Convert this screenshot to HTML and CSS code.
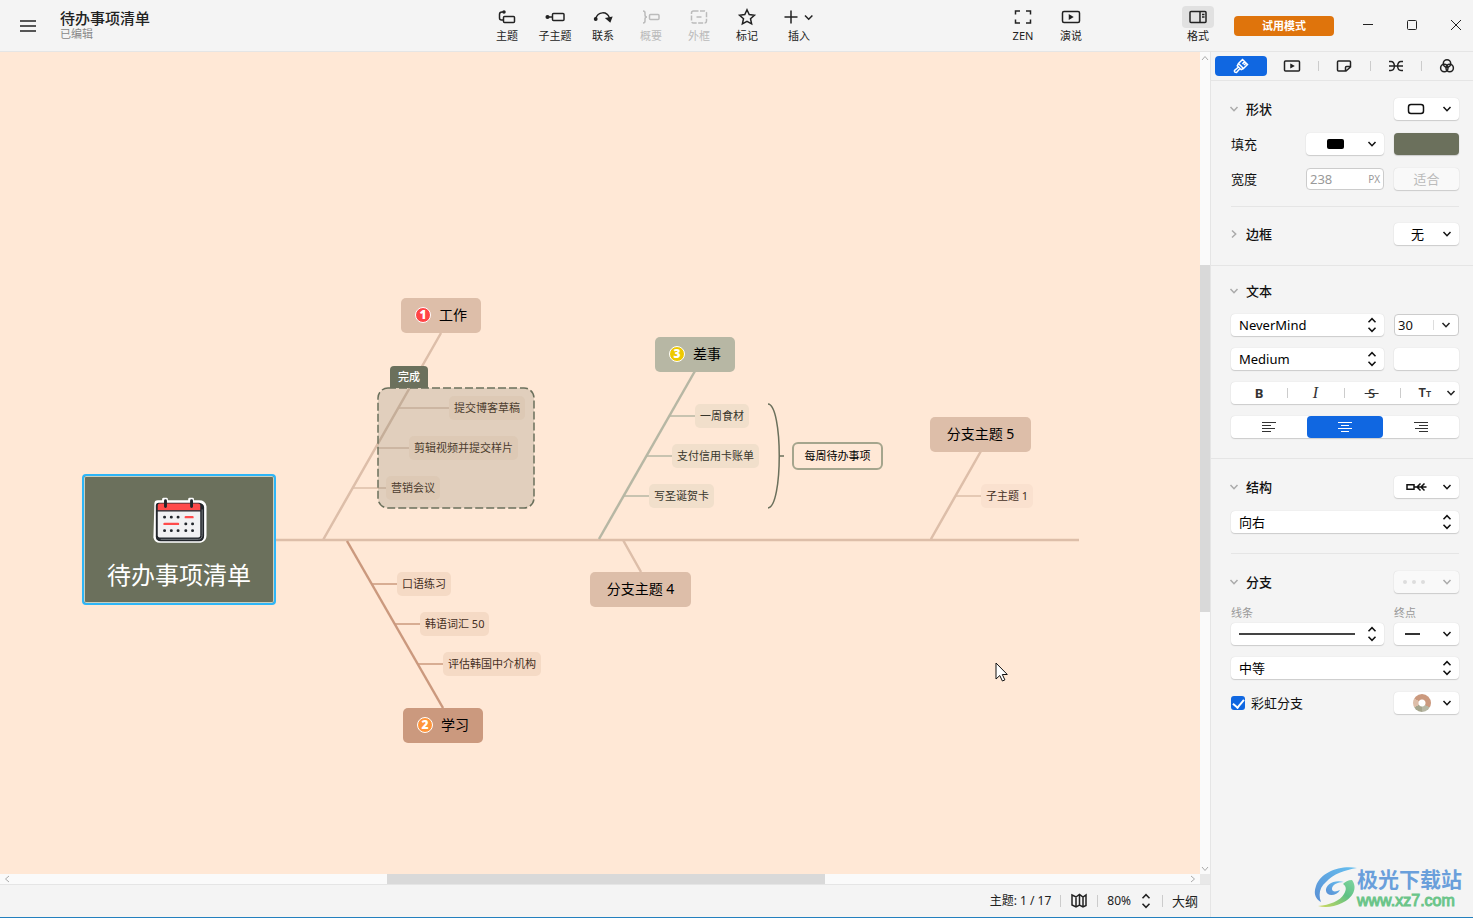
FILE: index.html
```html
<!DOCTYPE html>
<html lang="zh-CN">
<head>
<meta charset="utf-8">
<title>待办事项清单</title>
<link rel="stylesheet" href="styles.css">
</head>
<body>
<svg class="defs" aria-hidden="true">
  <symbol id="down" viewBox="0 0 10 10"><path d="M1.500 3 5 6.700 8.500 3"/></symbol>
  <symbol id="updown" viewBox="0 0 10 16"><path d="M1.500 5.300 5 1.700l3.500 3.600M1.500 10.700 5 14.300l3.500-3.600"/></symbol>
</svg>
<header class="topbar">
  <div class="brand">
    <button class="menu" aria-label="菜单"><svg width="16" height="14" viewBox="0 0 16 14"><path d="M0 2h16M0 7h16M0 12h16"/></svg></button>
    <div>
      <h1 class="doc-title">待办事项清单</h1>
      <p class="doc-state">已编辑</p>
    </div>
  </div>
  <nav class="tools">
    <button class="tool"><svg width="20" height="18" viewBox="0 0 20 18"><rect x="6.500" y="8.500" width="11" height="6" rx="1"/><path d="M6 12H4.500Q2.500 12 2.500 10V6.500Q2.500 4 5 4H6"/><circle class="solid" cx="7" cy="4" r="1"/></svg><span>主题</span></button>
    <button class="tool"><svg width="20" height="18" viewBox="0 0 20 18"><rect x="7.500" y="5.500" width="11.500" height="7" rx="1"/><path d="M3 9h4"/><circle class="solid" cx="2.500" cy="9" r="1.300"/></svg><span>子主题</span></button>
    <button class="tool"><svg width="20" height="18" viewBox="0 0 20 18"><path d="M2.500 11C5 3 14 3 16.500 10"/><circle class="solid" cx="2.700" cy="11" r="1.200"/><path class="solid" d="m13.500 10.500 5-1-1.500 4z"/></svg><span>联系</span></button>
    <button class="tool" disabled><svg width="20" height="18" viewBox="0 0 20 18"><path d="M2 3Q4 3 4 5v2q0 2 2 2-2 0-2 2v2q0 2-2 2"/><rect x="8.500" y="6.500" width="9.500" height="5" rx="1"/></svg><span>概要</span></button>
    <button class="tool" disabled><svg width="20" height="18" viewBox="0 0 20 18"><rect x="2.500" y="3" width="15" height="12" rx="2" stroke-dasharray="5 1.500"/><path d="M7.500 9h5"/></svg><span>外框</span></button>
    <button class="tool"><svg width="20" height="18" viewBox="0 0 20 18"><path d="m10 1.800 2.200 4.800 5.200.600-3.900 3.500 1.100 5.200L10 13.300l-4.600 2.600 1.100-5.200-3.900-3.500 5.200-.6z"/></svg><span>标记</span></button>
    <button class="tool insert"><svg width="32" height="18" viewBox="0 0 32 18"><path d="M1.500 9h13M8 2.500v13M22 7.500l3.700 3.700 3.700-3.700"/></svg><span>插入</span></button>
  </nav>
  <div></div>
  <nav class="tools">
    <button class="tool"><svg width="20" height="18" viewBox="0 0 20 18"><path d="M2.500 6.500V3H7M13 3h4.500v3.500M17.500 11.500V15H13M7 15H2.500v-3.500"/></svg><span>ZEN</span></button>
    <button class="tool"><svg width="20" height="18" viewBox="0 0 20 18"><rect x="1.500" y="3.500" width="17" height="11" rx="1.500"/><path class="solid" d="m8.500 7.300 2.800 1.700-2.800 1.700z"/></svg><span>演说</span></button>
  </nav>
  <div></div>
  <div class="right-tools">
    <button class="tool format"><svg width="32" height="22" viewBox="0 0 32 22"><rect x="8" y="5.500" width="16" height="11" rx="1"/><path d="M18 5.500v11M20 8.500h2.500M20 11h2.500"/></svg><span>格式</span></button>
    <button class="trial">试用模式</button>
    <div class="window-buttons">
      <button aria-label="最小化"><svg width="12" height="12" viewBox="0 0 12 12"><path d="M1 5.500h10"/></svg></button>
      <button aria-label="最大化"><svg width="12" height="12" viewBox="0 0 12 12"><rect x="1.500" y="1.500" width="9" height="9" rx="1"/></svg></button>
      <button aria-label="关闭"><svg width="12" height="12" viewBox="0 0 12 12"><path d="m1 1 10 10M11 1 1 11"/></svg></button>
    </div>
  </div>
</header>
<div class="body">
  <section class="workspace">
    <main class="canvas">
      <svg class="links" width="1200" height="822" viewBox="0 52 1200 822" aria-hidden="true">
        <g class="sand">
          <path d="M276 540h803M441 333 323 540M623 540l18 32M981 451l-50 88"/>
          <path class="thin" d="M399 408h52M377 448h33M353 488h34M955 496h26"/>
        </g>
        <g class="olive">
          <path d="m695 371-96 168"/>
          <path class="thin" d="M670 416h27M647 456h26M624 496h26"/>
        </g>
        <g class="clay">
          <path d="m347 541 96 167"/>
          <path class="thin" d="M372 584h26M395 624h26M418 664h26"/>
        </g>
        <path class="brace" d="M768 404c15 1 15 103 0 104M779 456h5"/>
      </svg>
      <div class="central">
        <svg width="56" height="48" viewBox="0 0 58 48">
          <path class="halo" d="M5 6q0-2 2-2h6V1.500h3V4h24V1.500h3V4h7q5 0 6 5v30q0 5-5 6H9q-4 0-5-4z"/>
          <path d="M8 5h42q5 1 5 5v29q0 6-5 6H10q-5 0-5-5V8q0-3 3-3z" fill="#22262c"/>
          <path d="M7 13h44v26q0 2-2 2H9q-2 0-2-2z" fill="#f1f1f3"/>
          <path d="M9 6h40q2 0 2 2v5H7V8q0-2 2-2z" fill="#ff4b4b"/>
          <path d="M15 3v6M42 3v6" stroke="#22262c" stroke-width="3" stroke-linecap="round"/>
          <path d="M6 13.500h46" stroke="#22262c" stroke-width="1.500"/>
          <path d="M53 12v26q0 5-4 5H10" stroke="#777b80" stroke-width="1" fill="none"/>
          <path d="M14 20h.1M21 20h.1M28 20h.1M36 27h.1M43 27h.1M14 34h.1M21 34h.1M28 34h.1M36 34h.1M43 34h.1" stroke="#22262c" stroke-width="3" stroke-linecap="round"/>
          <path d="M36 20h7M14 27h14" stroke="#ff4b4b" stroke-width="2.500" stroke-linecap="round"/>
        </svg>
        <span>待办事项清单</span>
      </div>
      <div class="topic work"><i class="num red">1</i>工作</div>
      <div class="leaf w1">提交博客草稿</div>
      <div class="leaf w2">剪辑视频并提交样片</div>
      <div class="leaf w3">营销会议</div>
      <svg class="boundary" width="158" height="122" viewBox="0 0 158 122"><rect x="1" y="1" width="156" height="120" rx="10"/></svg>
      <div class="boundary-label">完成</div>
      <div class="topic errand"><i class="num yellow">3</i>差事</div>
      <div class="leaf green e1">一周食材</div>
      <div class="leaf green e2">支付信用卡账单</div>
      <div class="leaf green e3">写圣诞贺卡</div>
      <div class="summary">每周待办事项</div>
      <div class="topic four">分支主题 4</div>
      <div class="topic five">分支主题 5</div>
      <div class="leaf pale f1">子主题 1</div>
      <div class="leaf s1">口语练习</div>
      <div class="leaf s2">韩语词汇 50</div>
      <div class="leaf s3">评估韩国中介机构</div>
      <div class="topic study"><i class="num orange">2</i>学习</div>
      <svg class="cursor" width="14" height="22" viewBox="0 0 14 22"><path d="M1 1v16l3.800-3.500 2.600 5.500 2.500-1.100-2.600-5.400h5z"/></svg>
    </main>
    <div class="vbar"><svg width="8" height="6" viewBox="0 0 8 6"><path d="m1 5 3-3.500L7 5"/></svg><div class="vtrack"><div class="thumb"></div></div><svg width="8" height="6" viewBox="0 0 8 6"><path d="m1 1 3 3.500L7 1"/></svg></div>
    <div class="hbar"><svg width="6" height="8" viewBox="0 0 6 8"><path d="M5 1 1.500 4 5 7"/></svg><div class="htrack"><div class="thumb"></div></div><svg width="6" height="8" viewBox="0 0 6 8"><path d="m1 1 3.500 3L1 7"/></svg></div>
    <div class="corner"></div>
    <footer class="status">
      <span>主题: 1 / 17</span><hr>
      <button aria-label="导航图"><svg width="18" height="16" viewBox="0 0 18 16"><path d="m2 2 4 2 3.500-2.500L13 4l3-2v10.500L13 14l-3.500-2L6 14l-4-2zM6 4v10M9.500 1.500V12M13 4v10"/></svg></button><hr>
      <button class="zoom">80%<svg width="10" height="16"><use href="#updown"/></svg></button><hr>
      <button class="outline">大纲</button>
    </footer>
  </section>
  <aside class="panel">
    <nav class="tabs">
      <button class="tab active" aria-label="样式"><svg width="16" height="16" viewBox="0 0 16 16"><path d="m9.500 1.500 5 5-4 4-5-5zM5.500 5.500 4.300 7.800l3.900 3.900 2.300-1.200M5.500 9l-4 3.500q-.5 2 2 2L7 10.500M11.500 3.500 9.500 6M13 5l-2 2"/></svg></button>
      <button class="tab" aria-label="演说"><svg width="18" height="16" viewBox="0 0 18 16"><rect x="1.500" y="3" width="15" height="10" rx="1"/><path class="solid" d="m8 6.700 2.300 1.300L8 9.300z"/></svg></button>
      <button class="tab" aria-label="贴纸"><svg width="18" height="16" viewBox="0 0 18 16"><path d="M3.500 3h11q1 0 1 1v5l-4.500 4H3.500q-1 0-1-1V4q0-1 1-1zM15.500 8.500h-4q-1 0-1 1V13"/></svg></button>
      <button class="tab" aria-label="骨架"><svg width="18" height="16" viewBox="0 0 18 16"><path d="M2 8h14M2 3.500h2Q7 3.500 7.500 8 7 12.500 4 12.500H2M16 3.500h-2q-3 0-3.500 4.500.5 4.500 3.500 4.500h2"/></svg></button>
      <button class="tab" aria-label="配色"><svg width="16" height="16" viewBox="0 0 16 16"><circle cx="8" cy="5.500" r="3.700"/><circle cx="5.300" cy="10" r="3.700"/><circle cx="10.700" cy="10" r="3.700"/></svg></button>
    </nav>
    <section class="group">
      <div class="row"><button class="head"><svg width="10" height="10"><use href="#down"/></svg>形状</button>
        <button class="ctl small" aria-label="形状样式"><svg width="18" height="12" viewBox="0 0 18 12"><rect x="1.500" y="1.500" width="15" height="9" rx="2.500"/></svg><svg width="10" height="10"><use href="#down"/></svg></button></div>
      <div class="row"><span class="name">填充</span>
        <button class="ctl mid" aria-label="填充样式"><i class="fill-chip"></i><svg width="10" height="10"><use href="#down"/></svg></button>
        <button class="swatch" aria-label="填充颜色"></button></div>
      <div class="row"><label class="name" for="width">宽度</label>
        <span class="field mid muted"><input id="width" value="238"><span>PX</span></span>
        <button class="ctl small fit" disabled>适合</button></div>
      <div class="divider"></div>
      <div class="row"><button class="head"><svg class="turn" width="10" height="10"><use href="#down"/></svg>边框</button>
        <span class="pick small"><select aria-label="边框" class="center"><option>无</option></select><svg width="10" height="10"><use href="#down"/></svg></span></div>
    </section>
    <section class="group text-group">
      <div class="row"><button class="head"><svg width="10" height="10"><use href="#down"/></svg>文本</button></div>
      <div class="row"><span class="pick"><select aria-label="字体"><option>NeverMind</option></select><svg width="10" height="16"><use href="#updown"/></svg></span>
        <span class="field small"><input aria-label="字号" value="30"><button aria-label="选择字号"><svg width="10" height="10"><use href="#down"/></svg></button></span></div>
      <div class="row"><span class="pick"><select aria-label="字重"><option>Medium</option></select><svg width="10" height="16"><use href="#updown"/></svg></span>
        <button class="swatch white" aria-label="文字颜色"></button></div>
      <div class="seg marks">
        <button><b>B</b></button><button class="italic"><em>I</em></button><button class="strike"><s>&nbsp;S&nbsp;</s></button>
        <button class="case"><span>T<small>T</small></span><svg width="10" height="10"><use href="#down"/></svg></button>
      </div>
      <div class="seg aligns">
        <button aria-label="左对齐"><svg width="16" height="12" viewBox="0 0 16 12"><path d="M1 1.500h14M1 4.500h9M1 7.500h13M1 10.500h9"/></svg></button>
        <button class="on" aria-label="居中"><svg width="16" height="12" viewBox="0 0 16 12"><path d="M1 1.500h14M4 4.500h8M1 7.500h14M4 10.500h8"/></svg></button>
        <button aria-label="右对齐"><svg width="16" height="12" viewBox="0 0 16 12"><path d="M1 1.500h14M6 4.500h9M2 7.500h13M6 10.500h9"/></svg></button>
      </div>
    </section>
    <section class="group last">
      <div class="row"><button class="head"><svg width="10" height="10"><use href="#down"/></svg>结构</button>
        <button class="ctl structure small" aria-label="结构样式"><svg width="21" height="10" viewBox="0 0 21 10"><path d="M1 2.800h7v4.400H1zM8 5h12.500M14.500 1.500 11 5l3.500 3.500M18.500 1.500 15 5l3.500 3.500"/></svg><svg width="10" height="10"><use href="#down"/></svg></button></div>
      <div class="row"><span class="pick"><select aria-label="方向"><option>向右</option></select><svg width="10" height="16"><use href="#updown"/></svg></span></div>
      <div class="divider wide"></div>
      <div class="row"><button class="head"><svg width="10" height="10"><use href="#down"/></svg>分支</button>
        <button class="ctl small" disabled aria-label="分支样式"><svg class="dots" width="22" height="6" viewBox="0 0 22 6"><circle cx="2" cy="3" r="2"/><circle cx="11" cy="3" r="2"/><circle cx="20" cy="3" r="2"/></svg><svg width="10" height="10"><use href="#down"/></svg></button></div>
      <div class="row labelled">
        <div class="stack"><span class="hint">线条</span><button class="ctl line" aria-label="线条"><i></i><svg width="10" height="16"><use href="#updown"/></svg></button></div>
        <div class="stack small"><span class="hint">终点</span><button class="ctl" aria-label="终点"><i class="dash"></i><svg width="10" height="10"><use href="#down"/></svg></button></div>
      </div>
      <div class="row"><span class="pick"><select aria-label="粗细"><option>中等</option></select><svg width="10" height="16"><use href="#updown"/></svg></span></div>
      <div class="row"><label class="check"><input type="checkbox" checked>彩虹分支</label>
        <button class="ctl small" aria-label="彩虹配色"><i class="ring"></i><svg width="10" height="10"><use href="#down"/></svg></button></div>
    </section>
  </aside>
</div>
<div class="watermark">
  <svg width="44" height="42" viewBox="0 0 44 42">
    <defs><linearGradient id="wb" x1="0" y1="1" x2="1" y2="0"><stop stop-color="#5a8fd4"/><stop offset="1" stop-color="#66c0f0"/></linearGradient><linearGradient id="wg" x1="0" y1="1" x2="1" y2="0"><stop stop-color="#cfd95a"/><stop offset=".6" stop-color="#5fc185"/><stop offset="1" stop-color="#7fd5a0"/></linearGradient></defs>
    <path fill="url(#wb)" d="M43 2C26-1 7 6 2 20c-3 8 0 13 5 16-3-8-1-15 5-20C19 8 31 4 43 2z"/>
    <path fill="url(#wb)" d="M30 16c-10-3-19 3-18 9 1 6 11 5 14-1-4 2-8 2-8-1 0-4 5-7 12-7z"/>
    <path fill="url(#wg)" d="M38 14c6 8 1 18-10 23-8 4-17 5-24 3 12-1 22-5 26-12 3-5 2-8-1-10 2-2 5-4 9-4z"/>
  </svg>
  <div><strong>极光下载站</strong><span>www.xz7.com</span></div>
</div>
</body>
</html>
```
FILE: styles.css
```css
* { box-sizing: border-box; }
html, body { height: 100%; margin: 0; }
body {
  display: flex; flex-direction: column; overflow: hidden;
  font: 13px/18px "Noto Sans", "Noto Sans CJK SC", sans-serif;
  color: #111; background: #f4f4f4; border-bottom: 1px solid #2380be;
}
button, input, select { font: inherit; color: inherit; margin: 0; padding: 0; border: 0; background: none; }
svg { display: block; flex: none; fill: none; stroke: #222; stroke-width: 1.500; }
svg .solid { fill: #222; }
i { font-style: normal; }
.defs { position: absolute; width: 0; height: 0; }

/* top bar */
.topbar {
  flex: none; height: 52px; border-bottom: 1px solid #e5e5e5;
  display: grid; grid-template-columns: 483fr 344px 172fr 97px 86fr 291px;
}
.brand { display: flex; align-items: center; gap: 24px; padding-left: 20px; }
.brand > div { padding-bottom: 2px; }
.doc-title { margin: 0; font-size: 15px; line-height: 18px; font-weight: 500; color: #222; }
.doc-state { margin: 0; font-size: 11px; line-height: 14px; color: #888; }
.tools { display: flex; }
.tool {
  width: 48px; padding-top: 8px; display: flex; flex-direction: column; align-items: center;
  font-size: 11px; line-height: 16px; color: #222;
}
.tool span { padding-top: 2px; }
.tool:disabled { color: #bbb; }
.tool:disabled svg { stroke: #bbb; }
.insert { width: 56px; }
.right-tools { display: flex; align-items: flex-start; }
.format { flex: none; width: 32px; padding-top: 6px; }
.format svg { background: #e1e1e1; border-radius: 4px; }
.format span { padding-top: 0; }
.trial {
  flex: none; width: 100px; height: 20px; margin: 16px 17px 0 20px; border-radius: 4px;
  background: #df740c; color: #fff; font-size: 11px; line-height: 18px; font-weight: 700;
}
.window-buttons { display: flex; gap: 10px; padding-top: 14px; }
.window-buttons button { width: 34px; height: 22px; display: grid; place-items: center; }
.window-buttons svg { stroke-width: 1; }

/* workspace */
.body { flex: 1; min-height: 0; display: flex; }
.workspace { flex: 1; min-width: 0; display: grid; grid-template: 1fr 10px 33px / 1fr 10px; }
.canvas { position: relative; overflow: hidden; background: #ffe8d6; }
.links { position: absolute; left: 0; top: 0; stroke-width: 2.500; }
.links .thin { stroke-width: 1.500; }
.sand { stroke: #ddbea9; }
.olive { stroke: #b7b7a4; }
.clay { stroke: #cb997e; }
.brace { stroke: #6b705c; stroke-width: 1.500; }
.vbar, .hbar { background: #fafafa; display: flex; align-items: center; justify-content: space-between; }
.vbar { flex-direction: column; padding: 3px 0 2px; gap: 4px; }
.hbar { padding: 0 4px; gap: 4px; }
.vbar svg, .hbar svg { stroke: #aaa; stroke-width: 1; }
.vtrack, .htrack { flex: 1; display: flex; align-self: stretch; }
.vtrack { flex-direction: column; }
.vtrack::before { content: ""; flex: 200; }
.vtrack .thumb { flex: 347; }
.vtrack::after { content: ""; flex: 250; }
.htrack::before { content: ""; flex: 373; }
.htrack .thumb { flex: 438; }
.htrack::after { content: ""; flex: 361; }
.thumb { background: #d9d9d9; }
.corner { background: #e8e8e8; }
.status {
  grid-column: 1 / -1; border-top: 1px solid #e5e5e5; padding-right: 12px; color: #222;
  display: flex; align-items: center; justify-content: flex-end; gap: 9px; font-size: 12px;
}
.outline { font-size: 13px; }
.status hr { width: 1px; height: 12px; margin: 0; border: 0; background: #ccc; }
.zoom { display: flex; align-items: center; gap: 10px; padding-right: 2px; }

/* map nodes */
.central {
  position: absolute; left: 82px; top: 422px; width: 194px; height: 131px;
  border: 2px solid #2eb6f8; border-radius: 4px; background: #6b705c; box-shadow: inset 0 0 0 1px #c9cfc0;
  display: flex; flex-direction: column; align-items: center; gap: 12px; padding-top: 21px;
  color: #fff; font-size: 24px; line-height: 36px;
}
.central svg { stroke: none; }
.central .halo { stroke: #fff; stroke-width: 3; stroke-linejoin: round; }
.topic {
  position: absolute; height: 35px; border-radius: 5px; background: #ddbea9; color: #000;
  display: flex; align-items: center; justify-content: center; gap: 8px; width: 80px; font-size: 14px; padding-bottom: 1px;
}
.work { left: 401px; top: 246px; }
.errand { left: 655px; top: 285px; background: #b7b7a4; }
.study { left: 403px; top: 656px; background: #cb997e; }
.four { left: 590px; top: 520px; width: 101px; }
.five { left: 930px; top: 365px; width: 101px; }
.num {
  width: 16px; height: 16px; border: 1px solid #fff; border-radius: 50%;
  color: #fff; font-size: 12px; line-height: 14px; font-weight: 900; text-align: center;
}
.red { background: #ff4545; }
.yellow { background: #eec900; }
.orange { background: #ff963c; }
.leaf {
  position: absolute; height: 24px; padding: 0 5px; border-radius: 5px;
  background: #f5dac5; color: #45301f; font-size: 11px; line-height: 23px; white-space: nowrap;
}
.green { background: #f1dfcb; color: #37362b; }
.pale { background: #fae1cf; }
.w1, .w2, .w3 { background: #fae0cc; }
.w1 { left: 449px; top: 344px; }
.w2 { left: 409px; top: 384px; }
.w3 { left: 386px; top: 424px; }
.e1 { left: 695px; top: 352px; }
.e2 { left: 672px; top: 392px; }
.e3 { left: 649px; top: 432px; }
.f1 { left: 981px; top: 432px; }
.s1 { left: 397px; top: 520px; }
.s2 { left: 420px; top: 560px; }
.s3 { left: 443px; top: 600px; }
.boundary { position: absolute; left: 377px; top: 335px; }
.boundary rect { fill: #6b705c; fill-opacity: .2; stroke: #6b705c; stroke-width: 1.500; stroke-dasharray: 8 3; }
.boundary-label {
  position: absolute; left: 390px; top: 314px; width: 38px; height: 22px; border-radius: 4px 4px 0 0;
  background: #6b705c; color: #fff; font-size: 11px; line-height: 22px; font-weight: 500; text-align: center;
}
.summary {
  position: absolute; left: 792px; top: 390px; width: 91px; height: 28px; border: 2px solid #a5a58d;
  border-radius: 6px; font-size: 11px; line-height: 24px; text-align: center; color: #000;
}
.cursor { position: absolute; left: 995px; top: 610px; }
.cursor path { fill: #fff; stroke: #111; stroke-width: 1; }

/* format panel */
.panel { flex: none; width: 263px; border-left: 1px solid #e5e5e5; }
.tabs { display: flex; height: 29px; padding: 4px 0 4px 4px; border-bottom: 1px solid #e5e5e5; }
.tab { flex: 1; display: grid; place-items: center; position: relative; }
.active { background: #1067e1; border-radius: 4px; }
.active svg { stroke: #fff; }
.tab:nth-child(n+3)::before { content: ""; position: absolute; left: 0; top: 5px; width: 1px; height: 10px; background: #ccc; }
.group { padding: 17px 14px 20px 20px; display: flex; flex-direction: column; gap: 13px; border-bottom: 1px solid #e5e5e5; }
.text-group { padding-top: 14px; gap: 12px; }
.last { border: 0; }
.row { display: flex; align-items: center; gap: 10px; min-height: 22px; }
.head { margin-right: auto; display: flex; align-items: center; gap: 7px; font-weight: 500; margin-left: -2px; }
.head svg { stroke: #aaa; }
.turn { transform: rotate(-90deg); }
.name { flex: 1; }
.divider { height: 1px; background: #e5e5e5; margin: 3px 0; }
.wide { margin: 7px 0 4px; }
.ctl, .pick, .seg, .swatch { height: 22px; border-radius: 4px; background: #fff; box-shadow: 0 0 1px #ccc, 0 1px 1px #ccc; }
.ctl { display: flex; align-items: center; justify-content: flex-end; gap: 17px; padding-right: 7px; }
.structure { gap: 15px; }
.ctl svg, .pick svg { stroke: #111; }
.small { flex: none; width: 65px; }
.mid { flex: none; width: 78px; }
.ctl.mid { gap: 23px; }
.ctl:disabled { background: #f9f9f9; color: #bbb; }
.ctl:disabled svg { stroke: #aaa; }
.fit:disabled { justify-content: center; padding: 0; }
.ctl:disabled .dots { stroke: none; fill: #ddd; }
.fill-chip { width: 17px; height: 10px; border-radius: 2px; background: #000; }
.swatch.swatch { flex: none; width: 65px; background: #6b705c; }
.swatch.white { background: #fff; }
.field { height: 22px; display: flex; align-items: center; background: #fff; border: 1px solid #ccc; border-radius: 4px; padding: 0 3px; }
.field input { flex: 1; width: 0; min-width: 0; outline: 0; }
.field button { padding-left: 7px; border-left: 1px solid #ddd; padding-right: 4px; }
.muted { color: #999; }
.muted span { font-size: 10px; }
.pick { flex: 1; display: grid; align-items: center; }
.pick.small { flex: none; }
.pick select { grid-area: 1 / 1; appearance: none; width: 100%; height: 22px; padding-left: 8px; outline: 0; color: #000; }
.pick select.center { padding-left: 17px; }
.pick svg { grid-area: 1 / 1; justify-self: end; margin-right: 7px; pointer-events: none; }
.seg { display: flex; }
.seg button { flex: 1; display: flex; align-items: center; justify-content: center; color: #333; }
.marks button + button { background: linear-gradient(#ccc, #ccc) left center / 1px 10px no-repeat; }
.italic { font-family: "Liberation Serif", serif; font-size: 16px; }
.strike { font-weight: 500; }
.case.case { justify-content: flex-end; gap: 15px; padding-right: 3px; font-weight: 600; }
.case small { font-size: 9px; }
.aligns svg { stroke: #333; stroke-width: 1; }
.on { background: #1067e1; border-radius: 4px; }
.aligns .on svg { stroke: #fff; }
.stack { flex: 1; display: flex; flex-direction: column; }
.stack.small { flex: none; }
.labelled { margin-top: -3px; margin-bottom: -1px; }
.hint { font-size: 11px; line-height: 20px; color: #999; }
.stack .ctl { gap: 22px; }
.stack .line { gap: 12px; padding-left: 8px; }
.line i { flex: 1; height: 2px; background: #444; }
.dash { width: 15px; height: 2px; background: #333; }
.check { margin-right: auto; display: flex; align-items: center; gap: 6px; }
.check input {
  appearance: none; width: 14px; height: 14px; border-radius: 3px; display: grid; place-items: center;
  background: #1067e1;
}
.check input::after { content: ""; width: 5px; height: 9px; border: solid #fff; border-width: 0 2px 2px 0; transform: translateY(-1px) rotate(40deg); }
.ring {
  width: 18px; height: 18px; border-radius: 50%; margin-right: -6px;
  background: radial-gradient(#fff 3px, transparent 4px), conic-gradient(#cb997e 0 60deg, #cb997e 60deg 120deg, #b7b7a4 120deg 180deg, #a5a58d 180deg 240deg, #ddbea9 240deg 300deg, #cb997e 300deg);
}

.watermark { position: absolute; right: 11px; bottom: 8px; display: flex; }
.watermark svg { stroke: none; margin-right: -1px; }
.watermark div { display: flex; flex-direction: column; }
.watermark strong { font-size: 21px; line-height: 26px; color: #6a9fdb; }
.watermark span { font: 16px/18px "Liberation Sans", Arial, sans-serif; color: #6cc58a; -webkit-text-stroke: 1px #6cc58a; }
```
